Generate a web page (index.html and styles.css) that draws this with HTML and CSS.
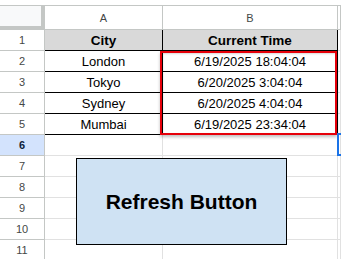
FILE: index.html
```html
<!DOCTYPE html>
<html lang="en">
  <head>
    <meta charset="UTF-8" />
    <meta name="viewport" content="width=device-width, initial-scale=1.0" />
    <title>Sheet</title>
    <link rel="stylesheet" href="styles.css">
  </head>
  <body>
    <div class="sheet">
      <div class="grid">
        <!-- column headers -->
        <div class="corner"></div>
        <div class="colhead">A</div>
        <div class="colhead">B</div>
        <div class="colhead"></div>

        <div class="rowhead">1</div>
        <div class="cell data th">City</div>
        <div class="cell data th">Current Time</div>
        <div class="cell"></div>

        <div class="rowhead">2</div>
        <div class="cell data">London</div>
        <div class="cell data">6/19/2025 18:04:04</div>
        <div class="cell"></div>

        <div class="rowhead">3</div>
        <div class="cell data">Tokyo</div>
        <div class="cell data">6/20/2025 3:04:04</div>
        <div class="cell"></div>

        <div class="rowhead">4</div>
        <div class="cell data">Sydney</div>
        <div class="cell data">6/20/2025 4:04:04</div>
        <div class="cell"></div>

        <div class="rowhead">5</div>
        <div class="cell data">Mumbai</div>
        <div class="cell data">6/19/2025 23:34:04</div>
        <div class="cell"></div>

        <div class="rowhead active">6</div>
        <div class="cell"></div>
        <div class="cell"></div>
        <div class="cell"></div>

        <div class="rowhead">7</div>
        <div class="cell"></div>
        <div class="cell"></div>
        <div class="cell"></div>

        <div class="rowhead">8</div>
        <div class="cell"></div>
        <div class="cell"></div>
        <div class="cell"></div>

        <div class="rowhead">9</div>
        <div class="cell"></div>
        <div class="cell"></div>
        <div class="cell"></div>

        <div class="rowhead">10</div>
        <div class="cell"></div>
        <div class="cell"></div>
        <div class="cell"></div>

        <div class="rowhead">11</div>
        <div class="cell"></div>
        <div class="cell"></div>
        <div class="cell"></div>
      </div>

      <!-- things drawn over the grid -->
      <div class="highlight"></div>
      <div class="selection"></div>
      <div class="refresh-btn">Refresh Button</div>
    </div>
  </body>
</html>
```

FILE: styles.css
```css
/* page */
body {
  margin: 0;
  background-color: #fff;
  font-family: "Liberation Sans", Arial, sans-serif;
  overflow: hidden;
}

.sheet {
  position: relative;
  width: 341px;
  height: 259px;
  padding-top: 5px;
  box-sizing: border-box;
  overflow: hidden;
}

/* spreadsheet grid */
.grid {
  display: grid;
  grid-template-columns: 45px 118px 175px 1fr;
  grid-template-rows: 25px repeat(11, 21px);
}

.grid > div {
  box-sizing: border-box;
  display: flex;
  align-items: center;
  justify-content: center;
}

.corner {
  background-color: #f8f9fa;
  border-top: 1px solid #c4c7c5;
  border-right: 4px solid #c4c7c5;
  border-bottom: 4px solid #c4c7c5;
}

.colhead {
  background-color: #fff;
  border-top: 1px solid #c4c7c5;
  border-right: 1px solid #c4c7c5;
  border-bottom: 1px solid #c4c7c5;
  font-size: 11px;
  color: #444746;
}

.rowhead {
  background-color: #fff;
  border-right: 1px solid #c4c7c5;
  border-bottom: 1px solid #c4c7c5;
  font-size: 11px;
  color: #444746;
}

.rowhead.active {
  background-color: #d3e3fd;
  color: #0b1d3a;
  font-weight: bold;
}

.cell {
  border-right: 1px solid #e1e1e1;
  border-bottom: 1px solid #e1e1e1;
  font-size: 13px;
  color: #000;
}

/* bordered table A1:B5 */
.cell.data {
  border-right-color: #000;
  border-bottom-color: #000;
}

.cell.th {
  background-color: #d9d9d9;
  font-weight: bold;
  font-size: 13.5px;
}

/* red annotation box round B2:B5 */
.highlight {
  position: absolute;
  left: 160px;
  top: 51px;
  width: 177px;
  height: 84px;
  box-sizing: border-box;
  border: 2px solid #e6000a;
  box-shadow: 0 2px 3px rgba(0, 0, 0, 0.25), inset 1px 1px 2px rgba(0, 0, 0, 0.15);
}

/* active cell C6, cut off at the right edge */
.selection {
  position: absolute;
  left: 337px;
  top: 133px;
  width: 4px;
  height: 23px;
  box-sizing: border-box;
  border: 2px solid #1a73e8;
  border-right: none;
}

/* drawing: refresh button */
.refresh-btn {
  position: absolute;
  left: 76px;
  top: 158px;
  width: 211px;
  height: 87px;
  box-sizing: border-box;
  border: 1px solid #000;
  background-color: #cfe2f3;
  display: flex;
  align-items: center;
  justify-content: center;
  font-size: 21px;
  font-weight: bold;
  color: #000;
}
```
